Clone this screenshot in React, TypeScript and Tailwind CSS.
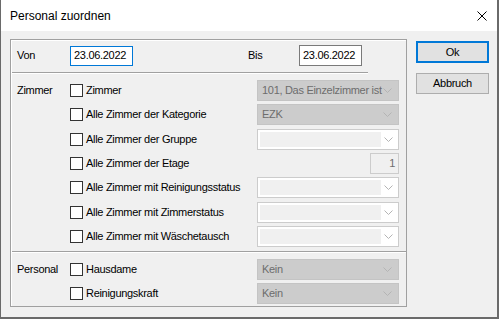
import React from 'react';

const Chevron: React.FC = () => (
  <svg width="9" height="5" viewBox="0 0 9 5" className="shrink-0">
    <path d="M0.5 0.5 L4.5 4.5 L8.5 0.5" fill="none" stroke="#b4b4b4" strokeWidth="1" />
  </svg>
);

const Check: React.FC = () => (
  <div className="w-[13px] h-[13px] border border-[#333333] bg-white shrink-0" />
);

const Combo: React.FC<{ value?: string; disabled?: boolean }> = ({ value, disabled }) =>
  disabled ? (
    <div className="w-[142px] h-[21px] border border-[#c4c4c4] bg-[#cccccc] flex items-center pl-[4px] pr-[6px] shrink-0">
      <span className="flex-1 text-[#6d6d6d] whitespace-nowrap overflow-hidden">{value}</span>
      <Chevron />
    </div>
  ) : (
    <div className="w-[142px] h-[21px] border border-[#cccccc] bg-white flex items-center p-[2px] shrink-0">
      <div className="h-full w-[121px] bg-[#f0f0f0]" />
      <div className="flex-1 flex justify-center">
        <Chevron />
      </div>
    </div>
  );

type Row = { label: string; mt: number; combo?: React.ReactNode };

const Line: React.FC<{ w: string }> = ({ w }) => (
  <div className={`${w} ml-[1px] flex flex-col`}>
    <div className="h-px bg-[#a0a0a0]" />
    <div className="h-px bg-white" />
  </div>
);

const App: React.FC = () => {
  const zimmer: Row[] = [
    { label: 'Zimmer', mt: 0, combo: <Combo disabled value="101, Das Einzelzimmer ist" /> },
    { label: 'Alle Zimmer der Kategorie', mt: 3, combo: <Combo disabled value="EZK" /> },
    { label: 'Alle Zimmer der Gruppe', mt: 4, combo: <Combo /> },
    {
      label: 'Alle Zimmer der Etage',
      mt: 3,
      combo: (
        <div className="w-[142px] flex justify-end shrink-0">
          <div className="w-[29px] h-[21px] border border-[#cccccc] bg-[#f0f0f0] flex items-center justify-end pr-[3px] text-[#6d6d6d]">
            1
          </div>
        </div>
      ),
    },
    { label: 'Alle Zimmer mit Reinigungsstatus', mt: 3, combo: <Combo /> },
    { label: 'Alle Zimmer mit Zimmerstatus', mt: 4, combo: <Combo /> },
    { label: 'Alle Zimmer mit Wäschetausch', mt: 3, combo: <Combo /> },
  ];

  const personal: Row[] = [
    { label: 'Hausdame', mt: 0, combo: <Combo disabled value="Kein" /> },
    { label: 'Reinigungskraft', mt: 3, combo: <Combo disabled value="Kein" /> },
  ];

  const renderRows = (title: string, rows: Row[]) => (
    <div className="flex flex-col">
      {rows.map((r, i) => (
        <div key={r.label} className="flex items-center h-[21px]" style={{ marginTop: r.mt }}>
          <div className="w-[59px] pl-[6px] shrink-0">{i === 0 ? title : ''}</div>
          <Check />
          <div className="w-[174px] pl-[3px] shrink-0 whitespace-nowrap">{r.label}</div>
          {r.combo}
        </div>
      ))}
    </div>
  );

  return (
    <div
      className="w-[499px] h-[319px] flex flex-col border-l border-r-2 border-b-2 border-[#6a6a6a] text-[11px] tracking-[-0.3px] text-black"
      style={{ fontFamily: '"Liberation Sans", Arial, sans-serif' }}
    >
      <div className="h-[31px] bg-white flex items-center justify-between pl-[9px] pr-[10px] shrink-0">
        <span className="text-[12px] tracking-normal">Personal zuordnen</span>
        <svg width="10" height="10" viewBox="0 0 10 10">
          <path d="M0.5 0.5 L9.5 9.5 M9.5 0.5 L0.5 9.5" stroke="#000" strokeWidth="1" />
        </svg>
      </div>

      <div className="flex-1 bg-[#f0f0f0] flex items-start pt-[8px] pl-[9px]">
        <div className="w-[397px] h-[268px] border border-[#a0a0a0] shadow-[inset_1px_1px_0_#ffffff] flex flex-col">
          <div className="h-[32px] flex items-center pb-[1px] shrink-0">
            <div className="w-[59px] pl-[6px]">Von</div>
            <div className="w-[63px] h-[20px] border border-[#0078d7] bg-white flex items-center pl-[3px]">23.06.2022</div>
            <div className="w-[115px]" />
            <div className="w-[51px]">Bis</div>
            <div className="w-[63px] h-[21px] border border-[#7a7a7a] bg-white flex items-center pl-[3px]">23.06.2022</div>
          </div>
          <Line w="w-[356px]" />
          <div className="pt-[6px]">{renderRows('Zimmer', zimmer)}</div>
          <div className="mt-[4px]">
            <Line w="w-[394px]" />
          </div>
          <div className="pt-[6px]">{renderRows('Personal', personal)}</div>
        </div>

        <div className="ml-[9px] mt-[2px] flex flex-col gap-[10px]">
          <button className="w-[73px] h-[22px] border-2 border-[#0078d7] bg-[#e1e1e1] flex items-center justify-center">
            Ok
          </button>
          <button className="w-[73px] h-[21px] border border-[#adadad] bg-[#e1e1e1] flex items-center justify-center">
            Abbruch
          </button>
        </div>
      </div>
    </div>
  );
};

export default App;
